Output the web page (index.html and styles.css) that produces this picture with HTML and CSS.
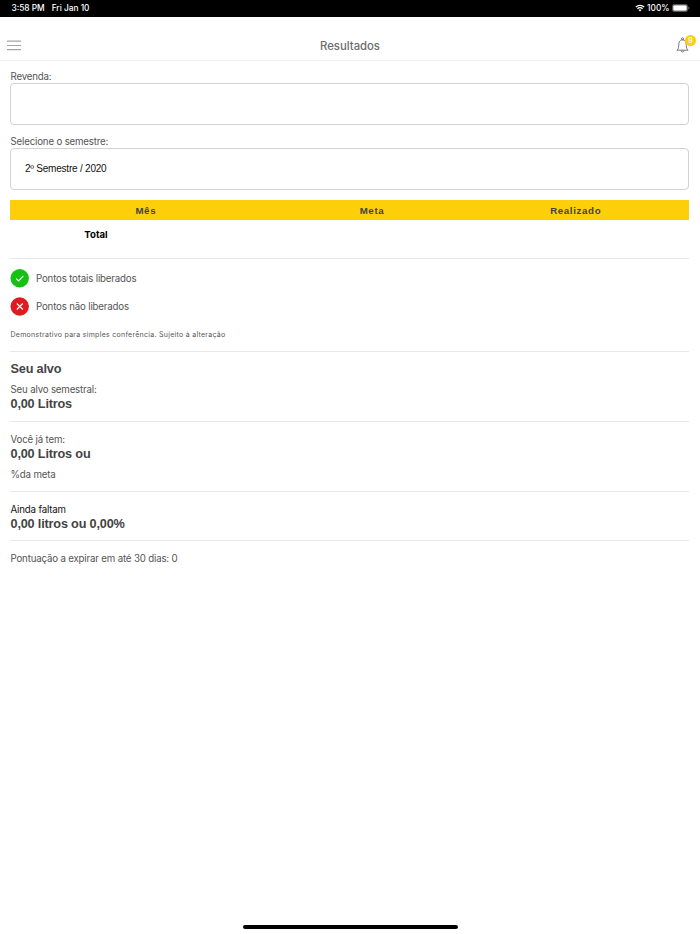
FILE: index.html
```html
<!DOCTYPE html>
<html lang="pt-BR">
<head>
<meta charset="utf-8">
<title>Resultados</title>
<link rel="stylesheet" href="styles.css">
</head>
<body>
<div class="status">
  <span class="time">3:58 PM</span><span class="date">Fri Jan 10</span>
  <span class="status-right">
    <svg class="wifi" width="10" height="8" viewBox="0 0 10 8"><path d="M.8 3a6 6 0 0 1 8.4 0M2.4 4.8a3.7 3.7 0 0 1 5.2 0" fill="none" stroke="#fff" stroke-width="1.3"/><path d="M5 7.6 3.5 6.1a2.1 2.1 0 0 1 3 0z" fill="#fff"/></svg>
    <span class="percent">100%</span>
    <svg class="battery" width="18" height="8" viewBox="0 0 18 8"><rect x=".4" y=".4" width="15.2" height="7.2" rx="2" fill="none" stroke="#888" stroke-width=".7"/><rect x="1.2" y="1.2" width="13.6" height="5.6" rx="1.2" fill="#fff"/><path d="M16.4 2.8q1 .3 1 1.2t-1 1.2z" fill="#888"/></svg>
  </span>
</div>
<header class="navbar">
  <svg class="menu" width="14" height="11" viewBox="0 0 14 11" stroke="#a5a5a5" stroke-width="1.200"><path d="M0 1.200h14M0 5.500h14M0 9.700h14"/></svg>
  <h1>Resultados</h1>
  <div class="bell">
    <svg width="14" height="16" viewBox="0 0 14 16" fill="none" stroke="#666" stroke-width=".9"><circle cx="6.500" cy="1.700" r="1"/><path d="M.9 13.200c1.200-1 1.700-2.200 1.800-4.500.1-3.800.9-5.900 3.800-5.900s3.700 2.100 3.800 5.900c.1 2.300.6 3.500 1.800 4.500z"/><path d="M5.100 13.600a1.400 1.400 0 0 0 2.800 0"/></svg>
    <span class="badge">9</span>
  </div>
</header>
<main>
  <div class="label">Revenda:</div>
  <div class="field"></div>
  <div class="label semestre">Selecione o semestre:</div>
  <div class="field"><span>2º Semestre / 2020</span></div>
  <div class="table-head"><span>Mês</span><span>Meta</span><span>Realizado</span></div>
  <div class="table-row"><b>Total</b></div>
  <section class="legend">
    <div class="legend-item"><svg width="19" height="19" viewBox="0 0 19 19"><circle cx="9.700" cy="9.200" r="9.200" fill="#15c213"/><path d="m6.200 9.600 2.400 2.300 4.700-5" fill="none" stroke="#fff" stroke-width="1.100"/></svg><span>Pontos totais liberados</span></div>
    <div class="legend-item"><svg width="19" height="19" viewBox="0 0 19 19"><circle cx="9.700" cy="9.500" r="9.200" fill="#df1b20"/><path d="m6.800 6.500 6 6m0-6-6 6" fill="none" stroke="#fff" stroke-width="1.100"/></svg><span>Pontos não liberados</span></div>
    <p class="note">Demonstrativo para simples conferência. Sujeito à alteração</p>
  </section>
  <section class="target">
    <h2>Seu alvo</h2>
    <div class="text goal">Seu alvo semestral:</div>
    <div class="value">0,00 Litros</div>
  </section>
  <section class="current">
    <div class="text">Você já tem:</div>
    <div class="value">0,00 Litros ou</div>
    <div class="text meta">%da meta</div>
  </section>
  <section class="remaining">
    <div class="text dark">Ainda faltam</div>
    <div class="value">0,00 litros ou 0,00%</div>
  </section>
  <section class="expiry"><div class="text">Pontuação a expirar em até 30 dias: 0</div></section>
</main>
<div class="home"></div>
</body>
</html>
```
FILE: styles.css
```css
* { box-sizing: border-box; }
body { margin: 0; height: 934px; display: flex; flex-direction: column; background: #fff; color: #555; font-family: Inter, "Liberation Sans", sans-serif; font-size: 10px; overflow: hidden; }
h1, h2, p { margin: 0; }
svg { display: block; flex: none; }
.status { height: 16.500px; flex: none; background: #000; color: #fff; display: flex; align-items: center; padding: 0 10.500px 0 11.500px; font-size: 8.300px; font-weight: 500; line-height: 17px; }
.date { margin-left: 7px; }
.status-right { margin-left: auto; display: flex; align-items: center; }
.percent { margin: 0 2px; }
.navbar { height: 44.500px; flex: none; border-bottom: 1px solid #f0f0f0; position: relative; padding-top: 19px; }
.menu { position: absolute; left: 7px; top: 23.500px; }
h1 { font-size: 11.300px; line-height: 20px; font-weight: 500; text-align: center; color: #6c6c6c; }
.bell { position: absolute; left: 676px; top: 20px; }
.badge { position: absolute; left: 9px; top: -2px; width: 11px; height: 11px; border-radius: 50%; background: #fccf0a; color: #fff; font-size: 7px; line-height: 11px; font-weight: 600; text-align: center; }
main { padding: 8px 11px 0 10px; }
.label, .legend-item, .text { font-size: 9.700px; letter-spacing: -.17px; }
.label { line-height: 16px; height: 14px; padding-left: .5px; }
.semestre { margin-top: 9px; }
.field { height: 42px; border: 1px solid #d3d3d3; border-radius: 4px; padding-left: 14px; font: 10px/39px "Liberation Sans", sans-serif; letter-spacing: -.22px; color: #111; }
.table-head { margin-top: 10px; height: 20px; background: #fccf0a; display: flex; font: bold 9.700px/21px "Liberation Sans", sans-serif; letter-spacing: .65px; text-align: center; color: #444; }
.table-head span { width: 272px; }
.table-head span:nth-child(2) { width: 181px; }
.table-head span:nth-child(3) { width: 227px; }
.table-row { height: 38px; line-height: 29px; color: #000; }
.table-row b { display: block; width: 172px; text-align: center; font-weight: 700; font-size: 9.600px; }
section { border-top: 1px solid #e8e8e8; }
section > :not(.legend-item) { padding-left: .5px; }
.legend { height: 93px; padding-top: 9.500px; }
.legend-item { display: flex; align-items: center; gap: 7px; height: 19px; margin-bottom: 9.500px; }
.note { font-size: 7px; line-height: 10px; margin-top: 13.500px; letter-spacing: .28px; }
.target { height: 70px; padding-top: 8px; }
h2, .value { font: bold 12.700px/18px "Liberation Sans", sans-serif; letter-spacing: -.18px; color: #444; }
.text { line-height: 14px; }
.goal { margin-top: 5px; }
.value { line-height: 15px; }
.current { height: 70px; padding-top: 11px; }
.meta { margin-top: 6px; }
.remaining { height: 49px; padding-top: 11px; }
.remaining .value { line-height: 14px; }
.dark { color: #111; }
.expiry { padding-top: 11px; }
.home { margin: auto auto 5px; width: 215px; height: 4px; border-radius: 2px; background: #000; flex: none; }
```
